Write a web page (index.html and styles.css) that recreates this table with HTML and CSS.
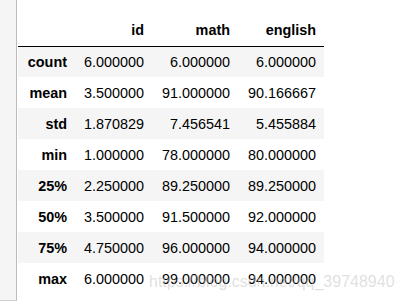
FILE: index.html
```html
<!DOCTYPE html>
<html>
<head>
<meta charset="utf-8">
<link rel="stylesheet" href="styles.css">
</head>
<body>
<div class="page">
  <div class="gutter"></div>
  <div class="output">
    <table class="df">
      <colgroup>
        <col class="c-idx"><col class="c-id"><col class="c-math"><col class="c-eng">
      </colgroup>
      <thead>
        <tr><th></th><th>id</th><th>math</th><th>english</th></tr>
      </thead>
      <tbody>
        <tr><th>count</th><td>6.000000</td><td>6.000000</td><td>6.000000</td></tr>
        <tr><th>mean</th><td>3.500000</td><td>91.000000</td><td>90.166667</td></tr>
        <tr><th>std</th><td>1.870829</td><td>7.456541</td><td>5.455884</td></tr>
        <tr><th>min</th><td>1.000000</td><td>78.000000</td><td>80.000000</td></tr>
        <tr><th>25%</th><td>2.250000</td><td>89.250000</td><td>89.250000</td></tr>
        <tr><th>50%</th><td>3.500000</td><td>91.500000</td><td>92.000000</td></tr>
        <tr><th>75%</th><td>4.750000</td><td>96.000000</td><td>94.000000</td></tr>
        <tr><th>max</th><td>6.000000</td><td>99.000000</td><td>94.000000</td></tr>
      </tbody>
    </table>
  </div>
  <div class="watermark">https://blog.csdn.net/qq_39748940</div>
</div>
</body>
</html>
```
FILE: styles.css
```css
html, body {
  margin: 0;
  padding: 0;
  background: #ffffff;
}
.page {
  position: relative;
  width: 402px;
  height: 302px;
  display: flex;
  align-items: flex-start;
  overflow: hidden;
  font-family: "Liberation Sans", Arial, sans-serif;
}
.gutter {
  width: 16px;
  height: 300px;
  flex: none;
  background: #f5f5f5;
  border-right: 1px solid #bdbdbd;
  border-bottom: 1px solid #cfcfcf;
}
.output {
  padding: 15px 0 0 1px;
}
.df {
  border-collapse: collapse;
  border-spacing: 0;
  table-layout: fixed;
  color: #000;
  font-size: 14.4px;
}
.c-idx { width: 57px; }
.c-id { width: 77px; }
.c-math { width: 86px; }
.c-eng { width: 86px; }
.df thead tr {
  border-bottom: 1px solid #000;
}
.df th, .df td {
  height: 31px;
  padding: 0 8px 0 0;
  box-sizing: border-box;
  text-align: right;
  vertical-align: middle;
  line-height: 16px;
  white-space: nowrap;
}
.df thead th {
  height: 31px;
}
.df th {
  font-weight: bold;
}
.df tbody tr:nth-child(odd) {
  background: #f5f5f5;
}
.watermark {
  position: absolute;
  left: 149px;
  top: 273px;
  font-size: 16px;
  line-height: 18px;
  color: rgba(185, 185, 185, 0.45);
  white-space: nowrap;
}
```
